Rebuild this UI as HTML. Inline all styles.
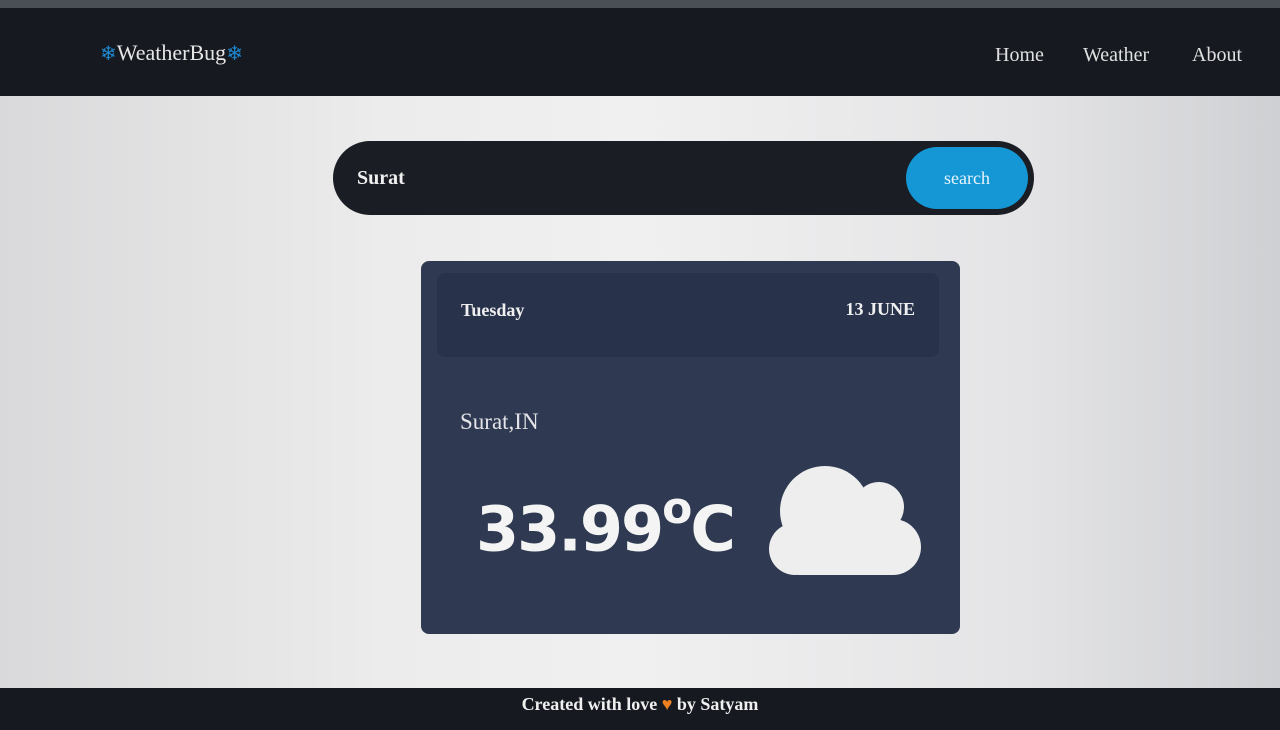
<!DOCTYPE html>
<html><head><style>
*{margin:0;padding:0;box-sizing:border-box}
body{width:1280px;height:730px;overflow:hidden;background:linear-gradient(90deg,#d9d9db 0%,#ececec 30%,#f0f0f0 50%,#e4e4e6 80%,#cfd0d3 100%);font-family:"Liberation Serif",serif;position:relative}
.top{position:absolute;left:0;top:0;width:1280px;height:10px;background:#4a4f55}
nav{position:absolute;left:0;top:8px;width:1280px;height:88px;background:#161a20}
.logo{position:absolute;left:100px;top:32px;color:#e6e6e6;font-size:22px}
.logo span{color:#1e88d0;font-size:20px}
.links{position:absolute;top:36px;color:#e0e0e0;font-size:20px}
.search{position:absolute;left:333px;top:141px;width:701px;height:74px;border-radius:37px;background:#1a1d24}
.search .t{position:absolute;left:24px;top:26px;color:#f0f0f0;font-size:20px;font-weight:bold}
.btn{position:absolute;left:573px;top:6px;width:122px;height:62px;border-radius:31px;background:#1497d4;color:#e8f4fb;font-size:18px;text-align:center;line-height:62px}
.card{position:absolute;left:421px;top:261px;width:539px;height:373px;border-radius:8px;background:#2f3a52}
.hd{position:absolute;left:16px;top:12px;width:502px;height:84px;border-radius:8px;background:#28324a;color:#f0f0f0;font-weight:bold;font-size:18px}
.city{position:absolute;left:39px;top:148px;color:#e4e4e8;font-size:23px}
.temp{position:absolute;left:55px;top:228px;color:#f4f4f4;font-size:62px;font-weight:bold;font-family:"DejaVu Sans",sans-serif;letter-spacing:-2px}
footer{position:absolute;left:0;top:688px;width:1280px;height:42px;background:#161a20;color:#f0f0f0;text-align:center;font-size:18px;font-weight:bold;line-height:32px}
</style></head><body>
<div class="top"></div>
<nav><div class="logo"><span>❄</span>WeatherBug<span>❄</span></div>
<div class="links" style="left:995px">Home</div><div class="links" style="left:1083px">Weather</div><div class="links" style="left:1192px">About</div></nav>
<div class="search"><div class="t">Surat</div><div class="btn">search</div></div>
<div class="card">
<div class="hd"><span style="position:absolute;left:24px;top:27px">Tuesday</span><span style="position:absolute;right:24px;top:26px">13 JUNE</span></div>
<div class="city">Surat,IN</div>
<div class="temp">33.99<sup style="font-size:44px;position:relative;top:-6px">o</sup>C</div>
<svg style="position:absolute;left:346px;top:204px" width="156" height="112" viewBox="0 0 156 112" fill="#eeeeee"><circle cx="58" cy="46" r="45"/><circle cx="112" cy="42" r="25"/><circle cx="126" cy="82" r="28"/><circle cx="28" cy="84" r="26"/><rect x="28" y="60" width="100" height="50" rx="4"/></svg>
</div>
<footer>Created with love <span style="color:#f08020">♥</span> by Satyam</footer>
</body></html>
